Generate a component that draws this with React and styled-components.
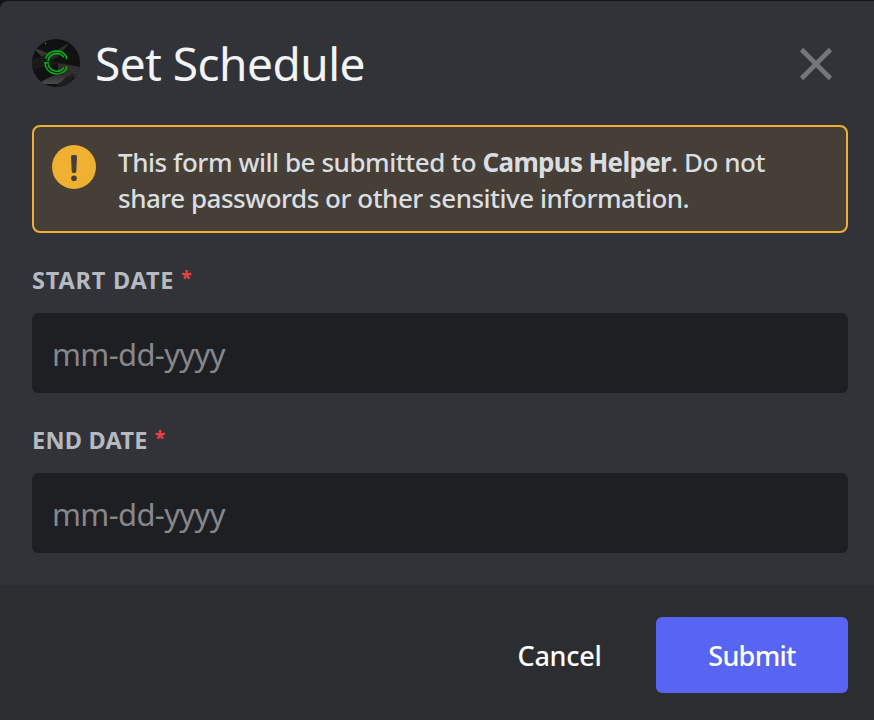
import React from 'react';
import styled, { createGlobalStyle } from 'styled-components';

const GlobalStyle = createGlobalStyle`
  * {
    box-sizing: border-box;
  }

  body {
    margin: 0;
    background: #141416;
    font-family: 'Noto Sans', 'Open Sans', sans-serif;
    overflow: hidden;
  }
`;

const Modal = styled('form')`
  display: flex;
  flex-direction: column;
  width: 874px;
  height: 719px;
  margin-top: 1px;
  background: #323338;
  border-radius: 8px 0 0 0;
  overflow: hidden;
`;

const Header = styled('header')`
  display: flex;
  align-items: center;
  height: 124px;
  padding: 0 40px 0 32px;
`;

const Title = styled('h1')`
  flex: 1;
  margin: 0 0 0 15px;
  color: #f2f3f5;
  font-size: 46px;
  font-weight: 400;
  line-height: 60px;
  letter-spacing: -0.5px;
`;

const CloseButton = styled('button')`
  display: flex;
  margin-top: 2px;
  padding: 0;
  border: 0;
  background: none;
`;

const Body = styled('div')`
  flex: 1;
  padding: 0 26px 0 32px;
`;

const Warning = styled('div')`
  display: flex;
  align-items: flex-start;
  height: 108px;
  padding: 17px 18px;
  border: 2px solid #f0b132;
  border-radius: 8px;
  background: #453f38;

  svg {
    flex: none;
    margin-top: 1px;
  }
`;

const WarningText = styled('p')`
  margin: 0 0 0 22px;
  color: #dbdee1;
  font-size: 26px;
  font-weight: 500;
  line-height: 36px;
  white-space: nowrap;

  b {
    font-weight: 700;
    letter-spacing: -0.7px;
  }
`;

const Line = styled('span')`
  display: block;
  letter-spacing: ${props => props.$spacing};
`;

const Field = styled('label')`
  display: block;
  margin-top: 31px;
`;

const Label = styled('span')`
  display: flex;
  height: 49px;
  color: #b5bac1;
  font-size: 23.5px;
  font-weight: 700;
  line-height: 32px;
  letter-spacing: ${props => props.$spacing};
  text-transform: uppercase;
`;

const Required = styled('span')`
  margin-left: 7px;
  color: #f23f43;
  font-size: 19px;
  line-height: 28px;
`;

const Input = styled('input')`
  display: block;
  width: 100%;
  height: 80px;
  padding: 2px 20px 0;
  border: 0;
  border-radius: 6px;
  background: #1e1f22;
  color: #dbdee1;
  font: 400 31px 'Noto Sans', 'Open Sans', sans-serif;
  letter-spacing: -0.65px;

  &::placeholder {
    color: #86878b;
    opacity: 1;
  }
`;

const Footer = styled('footer')`
  display: flex;
  justify-content: flex-end;
  height: 135px;
  padding: 32px 26px;
  background: #2b2d31;
`;

const Button = styled('button')`
  width: ${props => (props.$primary ? '192px' : '193px')};
  height: 76px;
  padding: 0;
  border: 0;
  border-radius: 6px;
  background: ${props => (props.$primary ? '#5865f2' : 'transparent')};
  color: #fff;
  font: 500 27px 'Noto Sans', 'Open Sans', sans-serif;
  letter-spacing: ${props => props.$spacing};
`;

const Avatar = () => (
  <svg width="48" height="48" viewBox="0 0 48 48">
    <defs>
      <clipPath id="avatar">
        <circle cx="24" cy="24" r="24" />
      </clipPath>
      <linearGradient id="fold" x1="0" y1="0" x2="1" y2="1">
        <stop offset="0" stopColor="#484848" />
        <stop offset="1" stopColor="#171717" />
      </linearGradient>
      <linearGradient id="base" x1="0" y1="0" x2="0" y2="1">
        <stop offset="0" stopColor="#2a2a2a" />
        <stop offset="1" stopColor="#4b4b4b" />
      </linearGradient>
    </defs>
    <g clipPath="url(#avatar)">
      <path d="M0 0h48v48H0z" fill="#111" />
      <path d="M2 9l17 6 18-11-10 13-12 7z" fill="url(#fold)" />
      <path d="M0 20l15-4 11 9-26 6z" fill="#1a1a1a" />
      <path d="M26 24l22 4v9l-22-3z" fill="#303030" />
      <path d="M5 45l15-8 19-3 8 2-22 9z" fill="url(#base)" />
      <path d="M24 48l10-10 9-3-8 13z" fill="#1e1e1e" />
      <circle cx="13.5" cy="4.5" r="0.7" fill="#777" />
    </g>
    <g fill="none" stroke="#06b812" strokeWidth="1.5">
      <path d="M13.6 19.5A11.7 11.7 0 0 1 34.4 17.5v2.7M16 22A8.8 8.8 0 0 1 31.8 18.2" />
      <path d="M17 23.8h-4A11.7 11.7 0 0 0 34.4 29.8v-2.6M16.2 25.5A8.8 8.8 0 0 0 31.8 28.6" />
    </g>
  </svg>
);

const CloseIcon = () => (
  <svg width="36" height="36" viewBox="0 0 36 36">
    <path d="M3.5 3.5l29 29m0-29l-29 29" stroke="#72767d" strokeWidth="4.6" />
  </svg>
);

const WarningIcon = () => (
  <svg width="44" height="44" viewBox="0 0 44 44">
    <circle cx="22" cy="22" r="22" fill="#f0b132" />
    <path
      d="M20.7 10h2.6a1.7 1.7 0 0 1 1.7 1.8l-.7 14.4a1.8 1.8 0 0 1-1.8 1.8h-1a1.8 1.8 0 0 1-1.8-1.8L19 11.8a1.7 1.7 0 0 1 1.7-1.8z"
      fill="#453f38"
    />
    <circle cx="22" cy="33.2" r="2.8" fill="#453f38" />
  </svg>
);

const DateField = ({ label, spacing }) => (
  <Field>
    <Label $spacing={spacing}>
      {label}
      <Required>*</Required>
    </Label>
    <Input placeholder="mm-dd-yyyy" />
  </Field>
);

export default () => (
  <>
    <GlobalStyle />
    <Modal>
      <Header>
        <Avatar />
        <Title>Set Schedule</Title>
        <CloseButton type="button" aria-label="Close">
          <CloseIcon />
        </CloseButton>
      </Header>
      <Body>
        <Warning>
          <WarningIcon />
          <WarningText>
            <Line $spacing="-0.45px">
              This form will be submitted to <b>Campus Helper</b>. Do not
            </Line>
            <Line $spacing="-0.5px">share passwords or other sensitive information.</Line>
          </WarningText>
        </Warning>
        <DateField label="Start date" spacing="0.8px" />
        <DateField label="End date" spacing="0.25px" />
      </Body>
      <Footer>
        <Button type="button" $spacing="-0.3px">
          Cancel
        </Button>
        <Button type="button" $primary $spacing="-0.7px">
          Submit
        </Button>
      </Footer>
    </Modal>
  </>
);
